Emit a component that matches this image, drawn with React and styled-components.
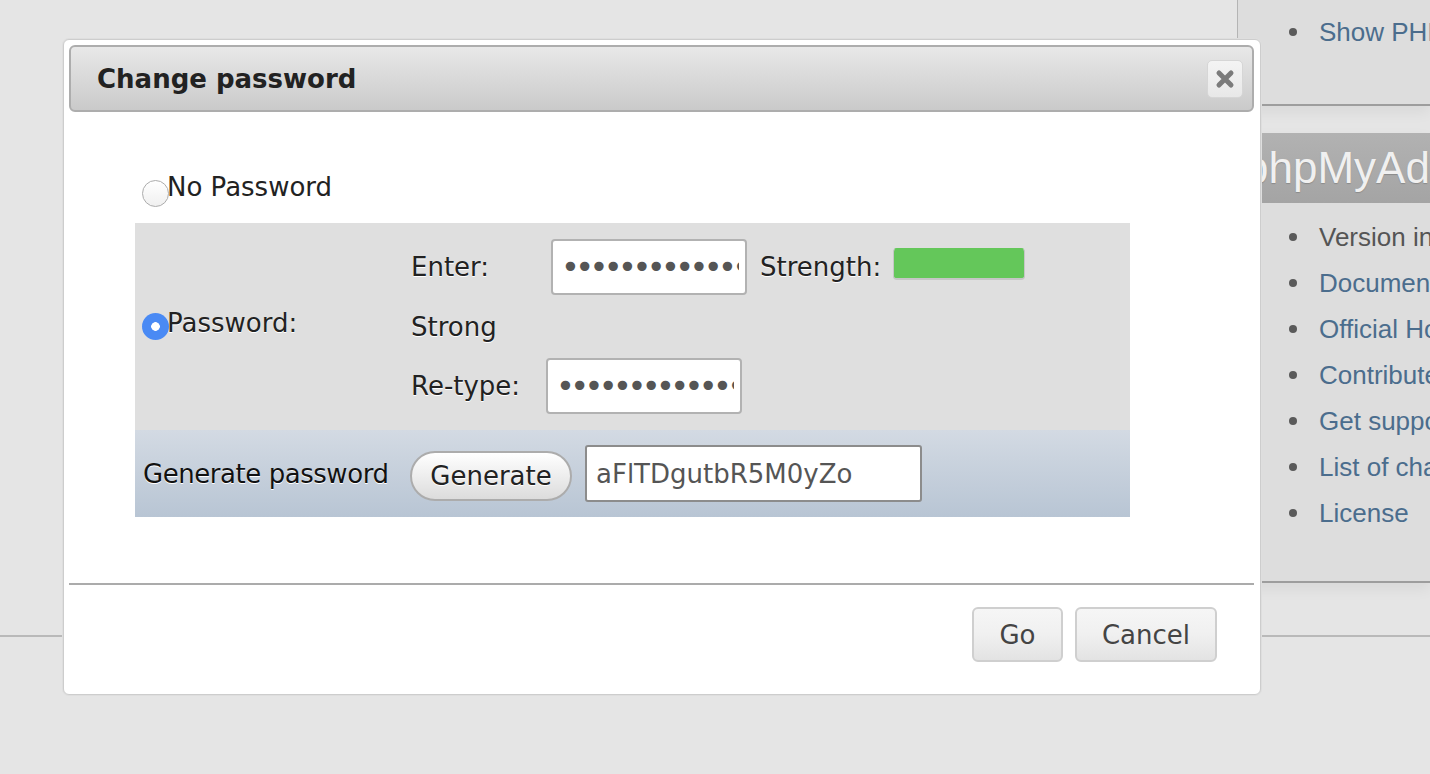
import React from "react";
import styled, { createGlobalStyle } from "styled-components";

const GlobalStyle = createGlobalStyle`
  html, body {
    margin: 0;
    padding: 0;
    background: #e5e5e5;
    overflow: hidden;
  }
  body {
    width: 1430px;
    height: 774px;
  }
`;

const Page = styled.div`
  position: relative;
  width: 1430px;
  height: 774px;
  background: #e5e5e5;
  overflow: hidden;
`;

const Layout = styled.div`
  display: flex;
  height: 637px;
  box-sizing: border-box;
  border-bottom: 2px solid #b9b9b9;
`;

const Main = styled.div`
  flex: 1;
`;

const Sidebar = styled.div`
  width: 193px;
  flex-shrink: 0;
  display: flex;
  flex-direction: column;
  gap: 27px;
  overflow: hidden;
  font-family: "Liberation Sans", Arial, sans-serif;
  font-size: 26px;
  white-space: nowrap;
`;

const Panel = styled.div`
  background: #dddddd;
  border-left: 1px solid #b4b4b4;
  border-bottom: 2px solid #9d9d9d;
  box-shadow: 0 6px 14px rgba(0, 0, 0, 0.06);
  height: ${(p) => p.$height}px;
  box-sizing: border-box;
`;

const PanelHeader = styled.div`
  height: 70px;
  display: flex;
  align-items: center;
  padding-left: 6px;
  background: linear-gradient(#b2b2b2, #a4a4a4);
  color: #f0f0f0;
  font-size: 44px;
  text-shadow: 0 1px 1px #8a8a8a;
`;

const LinkList = styled.ul`
  list-style: none;
  margin: 0;
  padding: ${(p) => p.$top}px 0 0 0;
`;

const LinkItem = styled.li`
  display: flex;
  align-items: center;
  height: 46px;
  padding-left: 51px;
  color: ${(p) => (p.$plain ? "#555555" : "#4b6d8d")};
  &::before {
    content: "";
    width: 8px;
    height: 8px;
    border-radius: 50%;
    background: #5a5a5a;
    margin-right: 22px;
    flex-shrink: 0;
  }
`;

const Dialog = styled.div`
  position: absolute;
  left: 63px;
  top: 39px;
  width: 1198px;
  height: 656px;
  box-sizing: border-box;
  background: #ffffff;
  border: 1px solid #cdcdcd;
  border-radius: 6px;
  box-shadow: 0 0 0 1px #dedede;
  display: flex;
  flex-direction: column;
  font-family: "DejaVu Sans", Verdana, sans-serif;
  font-size: 26px;
  color: #222222;
`;

const TitleBar = styled.div`
  margin: 5px 6px 0 5px;
  height: 67px;
  box-sizing: border-box;
  border: 2px solid #adadad;
  border-radius: 6px;
  background: linear-gradient(#e8e8e8, #cacaca);
  display: flex;
  align-items: center;
  justify-content: space-between;
  padding: 0 9px 0 26px;
`;

const Title = styled.div`
  font-weight: bold;
  font-size: 26px;
  color: #222222;
`;

const CloseButton = styled.button`
  width: 36px;
  height: 38px;
  padding: 0;
  border: 1px solid #d6d6d6;
  border-radius: 5px;
  background: linear-gradient(#f4f4f4, #e8e8e8);
  display: flex;
  align-items: center;
  justify-content: center;
`;

const Content = styled.div`
  padding: 60px 0 0 71px;
  height: 471px;
  box-sizing: border-box;
`;

const NoPassRow = styled.div`
  display: flex;
  align-items: flex-start;
  height: 51px;
  padding-left: 7px;
`;

const Radio = styled.span`
  display: inline-block;
  width: 27px;
  height: 27px;
  box-sizing: border-box;
  border-radius: 50%;
  flex-shrink: 0;
  margin-top: ${(p) => p.$offset || 0}px;
  ${(p) =>
    p.$checked
      ? `
    background: radial-gradient(circle, #ffffff 0 4px, #4a8af4 4.6px);
  `
      : `
    background: linear-gradient(#ffffff, #f0f0f0);
    border: 1.5px solid #acacac;
  `}
`;

const RadioLabel = styled.span`
  line-height: 30px;
  margin-left: -2px;
  text-shadow: 0 1px 0 #ffffff;
  padding-bottom: ${(p) => p.$lift || 0}px;
`;

const OptionsTable = styled.div`
  width: 995px;
  background: #dfdfdf;
`;

const PasswordRow = styled.div`
  display: flex;
  height: 207px;
`;

const RadioCell = styled.div`
  width: 276px;
  padding-left: 7px;
  box-sizing: border-box;
  display: flex;
  align-items: center;
`;

const FieldsCell = styled.div`
  display: flex;
  flex-direction: column;
  padding: 16px 0;
`;

const FieldRow = styled.div`
  display: flex;
  align-items: center;
  height: ${(p) => p.$height}px;
`;

const FieldLabel = styled.span`
  width: ${(p) => p.$width || "auto"};
  flex-shrink: 0;
  line-height: 30px;
  text-shadow: 0 1px 0 #ffffff;
`;

const PasswordInput = styled.input`
  width: 196px;
  height: 56px;
  box-sizing: border-box;
  border: 2px solid #b2b2b2;
  border-radius: 4px;
  padding: 0 6px 0 8px;
  background: #ffffff;
  color: #555555;
  font-family: "DejaVu Sans", Verdana, sans-serif;
  font-size: 32px;
  letter-spacing: -4.6px;
  outline: none;
`;

const StrengthLabel = styled(FieldLabel)`
  margin-left: 13px;
`;

const Meter = styled.div`
  width: 132px;
  height: 32px;
  box-sizing: border-box;
  margin-left: 12px;
  margin-top: -6px;
  border-radius: 4px;
  background: #64c75a;
  border: 1px solid #c6c6c6;
  border-top-color: #64c75a;
  border-bottom-width: 2px;
`;

const GenerateRow = styled.div`
  display: flex;
  align-items: center;
  gap: 13px;
  height: 87px;
  padding-left: 8px;
  background: linear-gradient(#d3dae3, #b8c5d4);
`;

const GenerateLabel = styled.span`
  width: 254px;
  flex-shrink: 0;
  line-height: 30px;
  color: #111111;
  text-shadow: 0 1px 0 #ffffff;
  letter-spacing: -0.45px;
`;

const PillButton = styled.button`
  width: 162px;
  height: 50px;
  margin-top: 5px;
  border: 2px solid #acacac;
  border-radius: 25px;
  background: linear-gradient(#ffffff, #dcdcdc);
  font-family: "DejaVu Sans", Verdana, sans-serif;
  font-size: 26px;
  color: #222222;
  text-shadow: 0 1px 0 #ffffff;
  padding: 0;
`;

const GeneratedInput = styled.input`
  width: 337px;
  height: 57px;
  box-sizing: border-box;
  border: 2px solid #8c8c8c;
  border-radius: 3px;
  padding: 0 9px;
  background: #ffffff;
  color: #555555;
  font-family: "DejaVu Sans", Verdana, sans-serif;
  font-size: 26px;
  outline: none;
`;

const Separator = styled.div`
  margin: 0 6px 0 5px;
  border-top: 2px solid #ababab;
`;

const Footer = styled.div`
  display: flex;
  justify-content: flex-end;
  gap: 12px;
  padding: 22px 43px 0 0;
`;

const FooterButton = styled.button`
  width: ${(p) => p.$width}px;
  height: 55px;
  box-sizing: border-box;
  border: 2px solid #cfcfcf;
  border-radius: 6px;
  background: linear-gradient(#f6f6f6 0%, #f0f0f0 50%, #e3e3e3 100%);
  font-family: "DejaVu Sans", Verdana, sans-serif;
  font-size: 26px;
  color: #444444;
  padding: 0;
`;

const links = [
  { text: "Version information: 5.2.1", plain: true },
  { text: "Documentation" },
  { text: "Official Homepage" },
  { text: "Contribute" },
  { text: "Get support" },
  { text: "List of changes" },
  { text: "License" }
];

function CloseIcon() {
  return (
    <svg width="20" height="20" viewBox="0 0 20 20">
      <path
        d="M4 4 L16 16 M16 4 L4 16"
        stroke="#7b7b7b"
        strokeWidth="5"
        strokeLinecap="round"
      />
    </svg>
  );
}

export default function App() {
  return (
    <Page>
      <GlobalStyle />
      <Layout>
        <Main />
        <Sidebar>
          <Panel $height={106}>
            <LinkList $top={9}>
              <LinkItem>Show PHP information</LinkItem>
            </LinkList>
          </Panel>
          <Panel $height={450}>
            <PanelHeader>phpMyAdmin</PanelHeader>
            <LinkList $top={11}>
              {links.map((l) => (
                <LinkItem key={l.text} $plain={l.plain}>
                  {l.text}
                </LinkItem>
              ))}
            </LinkList>
          </Panel>
        </Sidebar>
      </Layout>

      <Dialog>
        <TitleBar>
          <Title>Change password</Title>
          <CloseButton>
            <CloseIcon />
          </CloseButton>
        </TitleBar>
        <Content>
          <NoPassRow>
            <Radio $offset={8} />
            <RadioLabel>No Password</RadioLabel>
          </NoPassRow>
          <OptionsTable>
            <PasswordRow>
              <RadioCell>
                <Radio $checked />
                <RadioLabel $lift={7}>Password:</RadioLabel>
              </RadioCell>
              <FieldsCell>
                <FieldRow $height={56}>
                  <FieldLabel $width="140px">Enter:</FieldLabel>
                  <PasswordInput type="password" readOnly defaultValue="abcdefghijklmnopq" />
                  <StrengthLabel>Strength:</StrengthLabel>
                  <Meter />
                </FieldRow>
                <FieldRow $height={63}>
                  <FieldLabel>Strong</FieldLabel>
                </FieldRow>
                <FieldRow $height={56}>
                  <FieldLabel $width="135px">Re-type:</FieldLabel>
                  <PasswordInput type="password" readOnly defaultValue="abcdefghijklmnopq" />
                </FieldRow>
              </FieldsCell>
            </PasswordRow>
            <GenerateRow>
              <GenerateLabel>Generate password</GenerateLabel>
              <PillButton>Generate</PillButton>
              <GeneratedInput readOnly defaultValue="aFlTDgutbR5M0yZo" />
            </GenerateRow>
          </OptionsTable>
        </Content>
        <Separator />
        <Footer>
          <FooterButton $width={91}>Go</FooterButton>
          <FooterButton $width={142}>Cancel</FooterButton>
        </Footer>
      </Dialog>
    </Page>
  );
}
